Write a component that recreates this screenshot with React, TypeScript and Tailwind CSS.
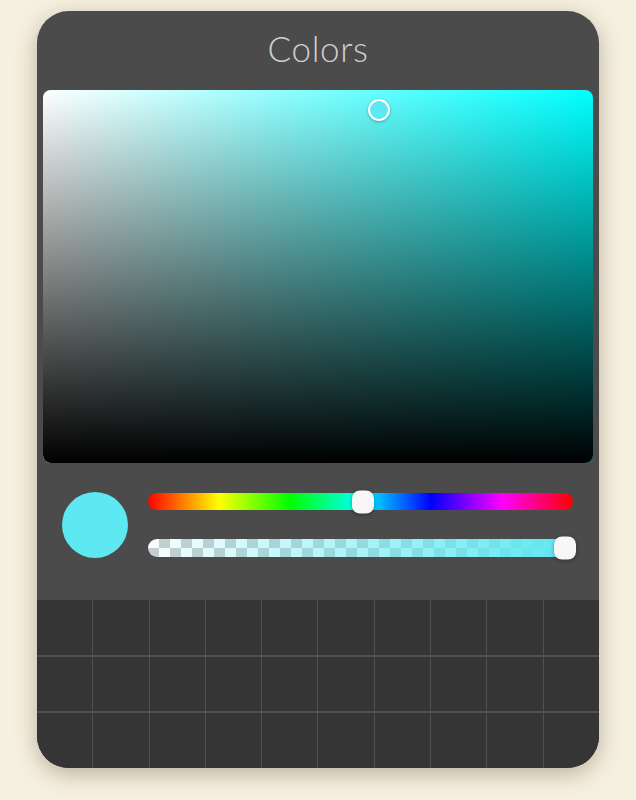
import React from "react";

const hue = 182;
const color = "rgb(94, 232, 242)";

export default function App() {
  const cells = Array.from({ length: 30 }, (_, i) => i);
  return (
    <div className="min-h-[800px] w-full bg-[#f6f0e0] pt-[11px] font-['Lato',sans-serif]">
      <div className="mx-auto flex h-[757px] w-[562px] flex-col overflow-hidden rounded-[32px] bg-[#4b4b4b] shadow-[0_6px_22px_rgba(80,60,30,0.35)]">
        {/* Header */}
        <div className="flex h-[79px] items-center justify-center pb-[4px]">
          <h1 className="text-[35px] font-light tracking-[0.6px] text-[#cfcfcf]">Colors</h1>
        </div>

        {/* Saturation / value area */}
        <div className="px-[6px]">
          <div className="relative h-[373px] overflow-hidden rounded-[8px] bg-[#00ffff]">
            <div className="absolute inset-0 bg-[linear-gradient(to_right,#ffffff,rgba(255,255,255,0))]" />
            <div className="absolute inset-0 bg-[linear-gradient(to_top,#000000,rgba(0,0,0,0))]" />
            <span
              className="absolute h-[22px] w-[22px] -translate-x-1/2 -translate-y-1/2 rounded-full border-2 border-white shadow-[0_1px_3px_rgba(0,0,0,0.3)]"
              style={{ left: "61%", top: "5.4%", backgroundColor: color }}
            />
          </div>
        </div>

        {/* Controls */}
        <div className="flex h-[137px] items-center gap-[20px] pb-[13px] pl-[25px] pr-[26px]">
          <div className="h-[66px] w-[66px] shrink-0 rounded-full" style={{ backgroundColor: color }} />
          <div className="flex flex-1 flex-col gap-[29px]">
            {/* Hue */}
            <div className="relative h-[17px] rounded-full bg-[linear-gradient(to_right,#ff0000,#ffff00,#00ff00,#00ffff,#0000ff,#ff00ff,#ff0000)]">
              <span
                className="absolute top-1/2 h-[23px] w-[22px] -translate-x-1/2 -translate-y-1/2 rounded-[8px] bg-[#f7f7f7] shadow-[0_1px_4px_rgba(0,0,0,0.35)]"
                style={{ left: `${(hue / 360) * 100}%` }}
              />
            </div>
            {/* Alpha */}
            <div className="relative h-[18px]">
              <div className="absolute inset-0 overflow-hidden rounded-full bg-[repeating-conic-gradient(#cccccc_0_25%,#ffffff_0_50%)] bg-[length:22px_18px]">
                <div className="absolute inset-0 bg-[linear-gradient(to_right,rgba(94,232,242,0.05),rgb(94,232,242))]" />
              </div>
              <span className="absolute right-[-3px] top-1/2 h-[23px] w-[22px] -translate-y-1/2 rounded-[8px] bg-[#f7f7f7] shadow-[0_1px_4px_rgba(0,0,0,0.35)]" />
            </div>
          </div>
        </div>

        {/* Swatch grid */}
        <div className="grid flex-1 grid-cols-10 grid-rows-3 gap-x-px gap-y-[2px] bg-[#505050]">
          {cells.map((c) => (
            <div key={c} className="bg-[#353535]" />
          ))}
        </div>
      </div>
    </div>
  );
}
